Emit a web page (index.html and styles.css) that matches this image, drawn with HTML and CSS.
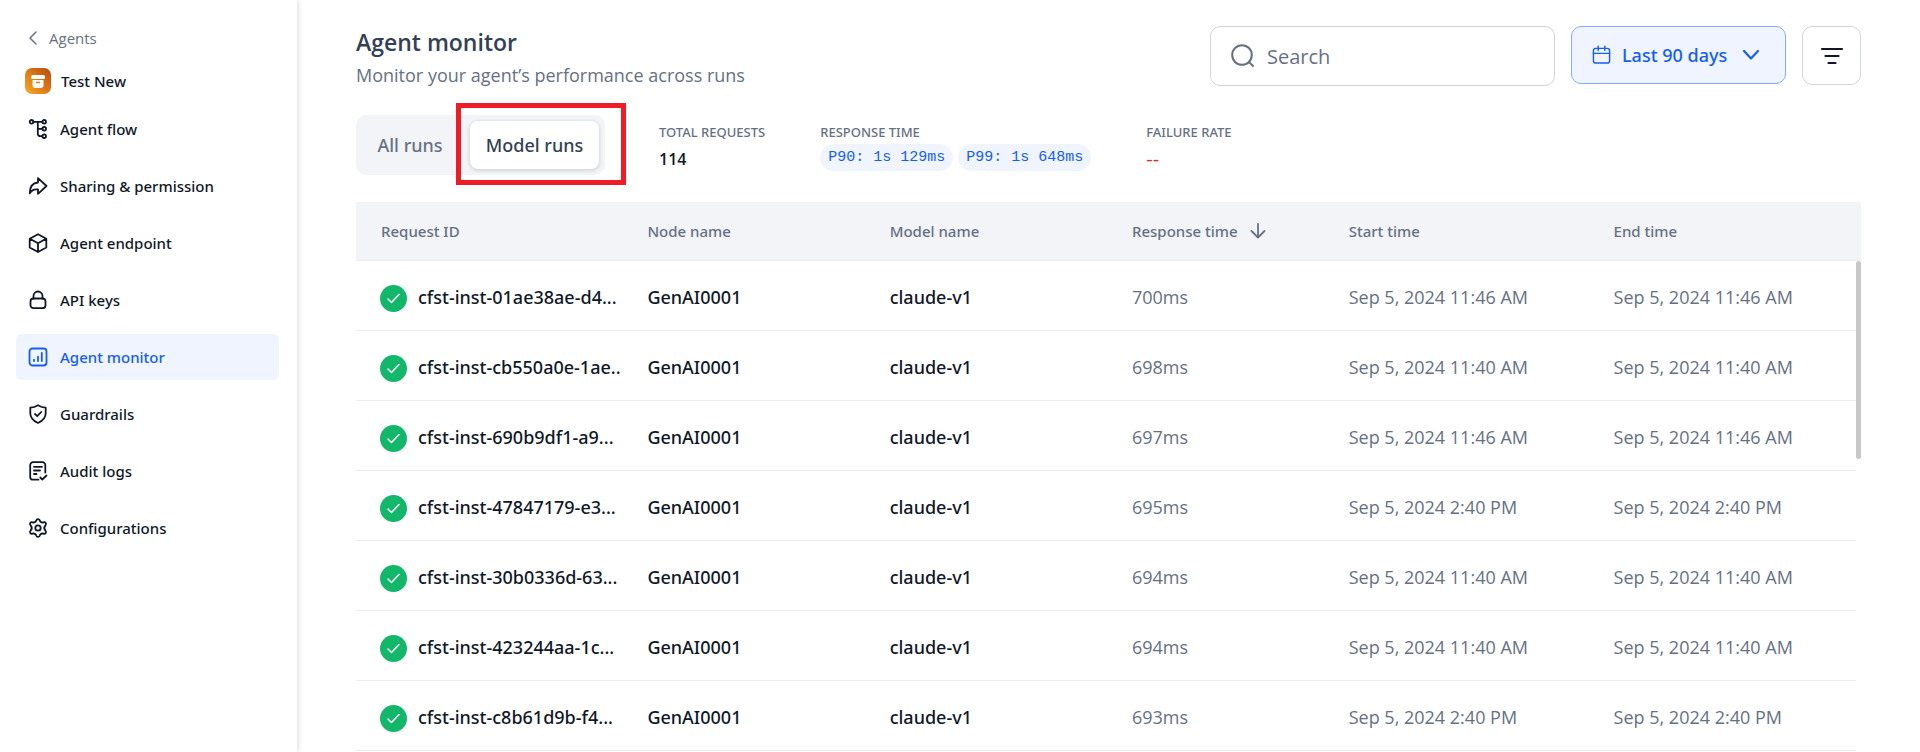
FILE: index.html
```html
<!DOCTYPE html>
<html lang="en">
<head>
<meta charset="utf-8">
<title>Agent monitor</title>
<link rel="stylesheet" href="styles.css">
</head>
<body>
<div class="app">
  <aside class="sidebar">
    <a class="back" href="#">
      <svg class="back-icon" viewBox="0 0 12 14"><path d="M9 1 3 7l6 6"/></svg>
      Agents
    </a>
    <div class="agent">
      <svg class="agent-logo" viewBox="0 0 26 26">
        <defs><linearGradient id="amber" x1="0" y1="1" x2="1" y2="0"><stop offset="0" stop-color="#fbab26"/><stop offset="1" stop-color="#b9480c"/></linearGradient></defs>
        <rect width="26" height="26" rx="7" fill="url(#amber)"/>
        <rect x="6" y="7" width="14" height="4" rx="1.500" fill="#fff"/>
        <path d="M7.500 12h11v5a3 3 0 0 1-3 3h-5a3 3 0 0 1-3-3z" fill="#fff"/>
        <path d="M11.500 14.500h3" stroke="#dd7a14" stroke-width="1.500" stroke-linecap="round"/>
      </svg>
      Test New
    </div>
    <nav class="nav">
      <a class="nav-item" href="#"><svg class="icon" viewBox="0 0 20 20"><circle cx="3.500" cy="2.800" r="1.800"/><circle cx="16.200" cy="2.800" r="1.800"/><circle cx="16.200" cy="9.800" r="1.800"/><circle cx="16.200" cy="17.200" r="1.800"/><path d="M5.300 2.800h9.100M9.800 2.800v12a2.400 2.400 0 0 0 2.400 2.400h2.200M9.800 9.800h4.600"/></svg>Agent flow</a>
      <a class="nav-item" href="#"><svg class="icon" viewBox="0 0 20 20"><path d="M10 2.200 18.500 10 10 17.800v-4.300c-3.500-.7-6.300.6-8.300 3.800C1.800 11 4.500 7 10 6.500z"/></svg>Sharing &amp; permission</a>
      <a class="nav-item" href="#"><svg class="icon" viewBox="0 0 20 20"><path d="M10 1.200 18.300 5.700v8.800L10 19l-8.300-4.500V5.700zM1.900 5.800 10 10.200l8.100-4.400M10 10.200V19"/></svg>Agent endpoint</a>
      <a class="nav-item" href="#"><svg class="icon" viewBox="0 0 20 20"><rect x="2.500" y="8.500" width="15" height="9.700" rx="3"/><path d="M5.500 8.500V6a4.500 4.500 0 0 1 9 0v2.500"/></svg>API keys</a>
      <a class="nav-item nav-item-active" href="#"><svg class="icon" viewBox="0 0 20 20"><rect x="1.500" y="1.500" width="17" height="17" rx="3"/><path d="M6 12.700V14M10 9.700V14M13.800 6v8"/></svg>Agent monitor</a>
      <a class="nav-item" href="#"><svg class="icon" viewBox="0 0 20 20"><path d="M10 1.200c2.400 1.500 5 2.300 7.700 2.500v5.600c0 4.500-3.200 7.700-7.700 9.700-4.500-2-7.700-5.200-7.700-9.700V3.700C5 3.500 7.600 2.700 10 1.200z"/><path d="m7 10 2.200 2.200 4-4.200"/></svg>Guardrails</a>
      <a class="nav-item" href="#"><svg class="icon" viewBox="0 0 20 20"><path d="M10.500 18.700H5a2.800 2.800 0 0 1-2.800-2.800V4A2.800 2.800 0 0 1 5 1.200h9.500A2.800 2.800 0 0 1 17.300 4v7.500M6 5.800h8M6 9.500h6M6 13h2.500M12.300 16.500l2 2 4.200-4"/></svg>Audit logs</a>
      <a class="nav-item" href="#"><svg class="icon" viewBox="0 0 20 20"><path d="M8.300 2.300a1.800 1.800 0 0 1 3.400 0c.4 1.700 2.100 2.600 3.800 2a1.800 1.800 0 0 1 1.900 3c-1.300 1.500-1.300 3.900 0 5.400a1.800 1.800 0 0 1-1.900 3c-1.700-.6-3.400.3-3.800 2a1.800 1.800 0 0 1-3.400 0c-.4-1.700-2.100-2.600-3.800-2a1.800 1.800 0 0 1-1.900-3c1.300-1.500 1.300-3.900 0-5.400a1.800 1.800 0 0 1 1.900-3c1.700.6 3.400-.3 3.800-2z"/><circle cx="10" cy="10" r="2.700"/></svg>Configurations</a>
    </nav>
  </aside>

  <main class="main">
    <header class="header">
      <div class="heading">
        <h1 class="title">Agent monitor</h1>
        <p class="subtitle">Monitor your agent’s performance across runs</p>
      </div>
      <div class="tools">
        <label class="search">
          <svg class="search-icon" viewBox="0 0 24 24"><circle cx="11" cy="11" r="9.800"/><path d="m18 18 4 4"/></svg>
          <input class="search-input" type="search" placeholder="Search" aria-label="Search">
        </label>
        <button class="range" type="button">
          <svg class="range-icon" viewBox="0 0 20 20"><rect x="1.500" y="3" width="17" height="15.500" rx="2.500"/><path d="M1.500 8.300h17M6.500.8v4.400M13.500.8v4.400"/></svg>
          Last 90 days
          <svg class="chevron" viewBox="0 0 18 12"><path d="m2 2 7 7.500L16 2"/></svg>
        </button>
        <button class="filter" type="button" aria-label="Filter">
          <svg class="filter-icon" viewBox="0 0 24 20"><path d="M2 3h20M5.500 10h13M8.500 17h7"/></svg>
        </button>
      </div>
    </header>

    <section class="summary">
      <div class="tabs">
        <button class="tab" type="button">All runs</button>
        <div class="tab-slot">
          <button class="tab tab-active" type="button">Model runs</button>
          <span class="highlight"></span>
        </div>
      </div>
      <dl class="stats">
        <div class="stat"><dt>TOTAL REQUESTS</dt><dd class="total">114</dd></div>
        <div class="stat"><dt>RESPONSE TIME</dt><dd class="pills"><span class="pill">P90: 1s 129ms</span><span class="pill">P99: 1s 648ms</span></dd></div>
        <div class="stat"><dt>FAILURE RATE</dt><dd class="failure">--</dd></div>
      </dl>
    </section>

    <div class="runs">
      <table class="table">
        <colgroup><col class="col-id"><col class="col-name"><col class="col-name"><col class="col-response"><col class="col-start"><col></colgroup>
        <thead>
          <tr><th>Request ID</th><th>Node name</th><th>Model name</th><th><span class="sorted">Response time<svg class="sort-icon" viewBox="0 0 16 16"><path d="M8 1v13M1.500 8 8 14.500 14.500 8"/></svg></span></th><th>Start time</th><th>End time</th></tr>
        </thead>
        <tbody>
          <tr><td><span class="request"><svg class="ok" viewBox="0 0 27 27"><circle cx="13.500" cy="13.500" r="13.500"/><path d="m8 14 3.500 3.500 7.500-8"/></svg>cfst-inst-01ae38ae-d4...</span></td><td>GenAI0001</td><td>claude-v1</td><td>700ms</td><td>Sep 5, 2024 11:46 AM</td><td>Sep 5, 2024 11:46 AM</td></tr>
          <tr><td><span class="request"><svg class="ok" viewBox="0 0 27 27"><circle cx="13.500" cy="13.500" r="13.500"/><path d="m8 14 3.500 3.500 7.500-8"/></svg>cfst-inst-cb550a0e-1ae..</span></td><td>GenAI0001</td><td>claude-v1</td><td>698ms</td><td>Sep 5, 2024 11:40 AM</td><td>Sep 5, 2024 11:40 AM</td></tr>
          <tr><td><span class="request"><svg class="ok" viewBox="0 0 27 27"><circle cx="13.500" cy="13.500" r="13.500"/><path d="m8 14 3.500 3.500 7.500-8"/></svg>cfst-inst-690b9df1-a9...</span></td><td>GenAI0001</td><td>claude-v1</td><td>697ms</td><td>Sep 5, 2024 11:46 AM</td><td>Sep 5, 2024 11:46 AM</td></tr>
          <tr><td><span class="request"><svg class="ok" viewBox="0 0 27 27"><circle cx="13.500" cy="13.500" r="13.500"/><path d="m8 14 3.500 3.500 7.500-8"/></svg>cfst-inst-47847179-e3...</span></td><td>GenAI0001</td><td>claude-v1</td><td>695ms</td><td>Sep 5, 2024 2:40 PM</td><td>Sep 5, 2024 2:40 PM</td></tr>
          <tr><td><span class="request"><svg class="ok" viewBox="0 0 27 27"><circle cx="13.500" cy="13.500" r="13.500"/><path d="m8 14 3.500 3.500 7.500-8"/></svg>cfst-inst-30b0336d-63...</span></td><td>GenAI0001</td><td>claude-v1</td><td>694ms</td><td>Sep 5, 2024 11:40 AM</td><td>Sep 5, 2024 11:40 AM</td></tr>
          <tr><td><span class="request"><svg class="ok" viewBox="0 0 27 27"><circle cx="13.500" cy="13.500" r="13.500"/><path d="m8 14 3.500 3.500 7.500-8"/></svg>cfst-inst-423244aa-1c...</span></td><td>GenAI0001</td><td>claude-v1</td><td>694ms</td><td>Sep 5, 2024 11:40 AM</td><td>Sep 5, 2024 11:40 AM</td></tr>
          <tr><td><span class="request"><svg class="ok" viewBox="0 0 27 27"><circle cx="13.500" cy="13.500" r="13.500"/><path d="m8 14 3.500 3.500 7.500-8"/></svg>cfst-inst-c8b61d9b-f4...</span></td><td>GenAI0001</td><td>claude-v1</td><td>693ms</td><td>Sep 5, 2024 2:40 PM</td><td>Sep 5, 2024 2:40 PM</td></tr>
        </tbody>
      </table>
      <div class="scroll-track"><div class="scroll-thumb"></div></div>
    </div>
  </main>
</div>
</body>
</html>
```
FILE: styles.css
```css
* { box-sizing: border-box; }

body {
  margin: 0;
  background: #fff;
  color: #101828;
  font-family: "Open Sans", "Noto Sans", sans-serif;
  font-size: 15px;
}

button, input { font: inherit; }
button { cursor: pointer; }
a { color: inherit; text-decoration: none; }
svg { flex: none; fill: none; stroke: currentColor; stroke-linecap: round; stroke-linejoin: round; }

.agent, .nav-item, .range, .tab, dt, th, td:nth-child(-n+3) {
  font-family: "Noto Sans", "Open Sans", sans-serif;
  font-weight: 500;
}

.app { display: flex; min-height: 100vh; }

/* Sidebar */
.sidebar {
  flex: none;
  width: 297px;
  padding: 25px 18px 0 16px;
  box-shadow: 1px 0 5px rgba(16, 24, 40, 0.16);
}
.back { display: flex; align-items: center; gap: 10px; height: 26px; padding-left: 11px; color: #667085; }
.back-icon { width: 12px; height: 14px; stroke-width: 1.5; }
.agent { display: flex; align-items: center; gap: 10px; height: 26px; margin: 17px 0 12px; padding-left: 9px; }
.agent-logo { width: 26px; height: 26px; stroke: none; }
.nav { display: flex; flex-direction: column; gap: 11px; }
.nav-item { display: flex; align-items: center; gap: 12px; height: 46px; padding-left: 12px; border-radius: 5px; }
.nav-item-active { background: #eff4ff; color: #155eef; }
.icon { width: 20px; height: 20px; stroke-width: 1.8; }

/* Header */
.main { flex: 1; min-width: 0; padding: 26px 59px 0; }
.header { display: flex; justify-content: space-between; align-items: flex-start; height: 60px; }
.title { margin: 0; color: #344054; font-size: 23px; font-weight: 600; line-height: 32px; }
.subtitle { margin: 0; color: #667085; font-size: 18px; line-height: 34px; }
.tools { display: flex; align-items: flex-start; gap: 16px; }
.search { display: flex; align-items: center; gap: 12px; width: 345px; height: 60px; padding: 0 20px; border: 1px solid #d0d5dd; border-radius: 10px; color: #667085; }
.search-icon { width: 24px; height: 24px; stroke-width: 2; }
.search-input { flex: 1; min-width: 0; padding: 1px 0 0; border: 0; outline: 0; background: none; color: #101828; font-size: 20px; }
.search-input::placeholder { color: #667085; opacity: 1; }
.range { display: flex; align-items: center; gap: 11px; width: 215px; height: 58px; padding: 0 20px; border: 1px solid #84adff; border-radius: 10px; background: #eff4ff; color: #155eef; font-size: 18px; white-space: nowrap; }
.range-icon { width: 19px; height: 20px; stroke-width: 1.5; }
.chevron { width: 18px; height: 12px; margin-left: 4px; stroke-width: 2.2; }
.filter { display: flex; align-items: center; justify-content: center; width: 59px; height: 59px; padding: 0; border: 1px solid #d0d5dd; border-radius: 10px; background: #fff; color: #101828; }
.filter-icon { width: 24px; height: 20px; stroke-width: 2.2; }

/* Tabs and totals */
.summary { display: flex; align-items: flex-start; gap: 54px; margin-top: 29px; }
.tabs { display: flex; align-items: center; gap: 12px; width: 249px; height: 60px; padding: 6px; border-radius: 10px; background: #f2f4f7; }
.tab { flex: 1; height: 48px; padding: 0; border: 0; border-radius: 8px; background: none; color: #667085; font-size: 18px; }
.tab-slot { position: relative; display: flex; width: 129px; }
.tab-active { background: #fff; color: #344054; box-shadow: 0 1px 4px rgba(16, 24, 40, 0.2); }
.highlight { position: absolute; inset: -18px -27px -16px -14px; border: 5px solid #ee1c25; pointer-events: none; }
.stats { display: flex; gap: 55px; margin: 7px 0 0; }
.stat:first-child { min-width: 106px; }
.stat dt { color: #667085; font-size: 13px; line-height: 20px; }
.stat dd { margin: 2px 0 0; line-height: 27px; }
.stat .total, .stat .failure { line-height: 30px; }
.total { font-size: 16px; font-weight: 600; }
.pills { display: flex; gap: 5px; }
.pill { padding: 0 8px; border-radius: 14px; background: #eff4ff; color: #155eef; font-family: "Liberation Mono", monospace; font-size: 15px; white-space: nowrap; }
.failure { color: #d92d20; font-size: 20px; }

/* Runs table */
.runs { position: relative; margin-top: 27px; }
.table { width: 100%; table-layout: fixed; border-collapse: separate; border-spacing: 0; }
.col-id { width: 17.7%; }
.col-name { width: 16.1%; }
.col-response { width: 14.4%; }
.col-start { width: 17.6%; }
th { height: 59px; padding: 0 0 0 25px; border-bottom: 1px solid #eaecf0; background: #f2f4f7; color: #667085; font-size: 15px; text-align: left; white-space: nowrap; }
td { height: 70px; padding: 3px 0 0 25px; border-bottom: 1px solid #eaecf0; color: #667085; font-size: 18px; white-space: nowrap; }
td:first-child { padding-left: 24px; }
td:nth-child(-n+3) { color: #101828; }
.sorted { display: flex; align-items: center; gap: 12px; }
.sort-icon { width: 16px; height: 16px; stroke-width: 1.8; }
.request { display: flex; align-items: center; gap: 11px; }
.ok { width: 27px; height: 27px; margin-top: 3px; }
.ok circle { fill: #12b76a; stroke: none; }
.ok path { stroke: #fff; stroke-width: 1.5; }
.scroll-track { position: absolute; top: 59px; right: 0; bottom: 0; width: 5px; background: #fff; }
.scroll-thumb { height: 198px; border-radius: 3px; background: #c8c8c8; }
```
